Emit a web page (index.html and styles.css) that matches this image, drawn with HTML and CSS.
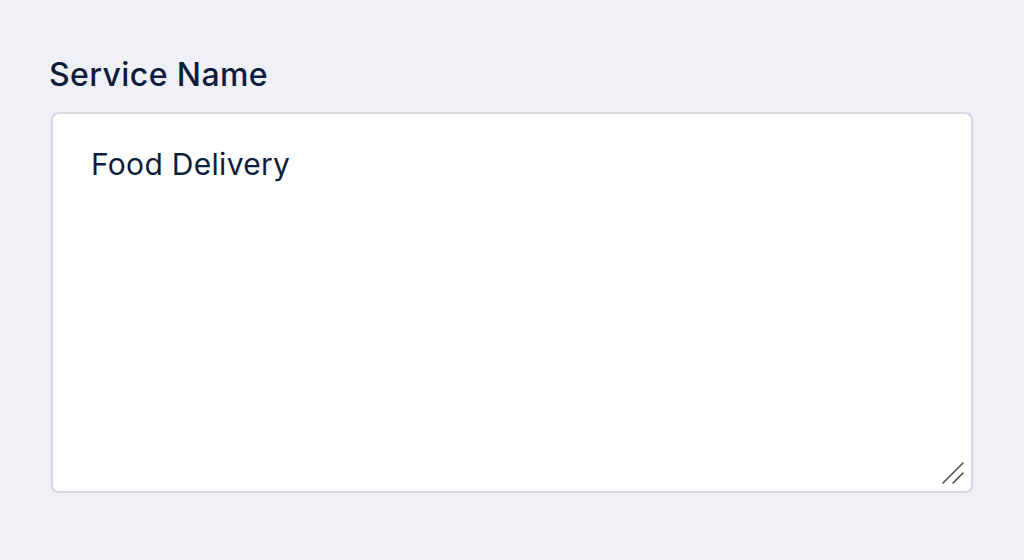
FILE: index.html
```html
<!DOCTYPE html>
<html>
<head>
<meta charset="utf-8">
<link rel="stylesheet" href="styles.css">
</head>
<body>
<div class="field">
  <label class="label" for="svc">Service Name</label>
  <div class="box">
    <textarea id="svc" class="input">Food Delivery</textarea>
    <svg class="grip" width="24" height="24" viewBox="0 0 24 24" aria-hidden="true">
      <line x1="2" y1="22" x2="22" y2="2" stroke="#4a4c57" stroke-width="1.6" stroke-linecap="round"/>
      <line x1="12" y1="22" x2="22" y2="12" stroke="#4a4c57" stroke-width="1.6" stroke-linecap="round"/>
    </svg>
  </div>
</div>
</body>
</html>
```
FILE: styles.css
```css
html, body {
  margin: 0;
  padding: 0;
  background: #f0f1f7;
  font-family: Inter, Roboto, "Liberation Sans", sans-serif;
}
.field {
  display: flex;
  flex-direction: column;
  align-items: flex-start;
  padding: 57px 51px 0 49px;
}
.label {
  font-size: 32px;
  font-weight: 500;
  letter-spacing: 0.4px;
  line-height: 36px;
  color: #0f1d3d;
  margin-bottom: 19px;
}
.box {
  position: relative;
  margin-left: 2px;
}
.input {
  display: block;
  box-sizing: border-box;
  width: 922px;
  height: 381px;
  padding: 30px 38px;
  border: 2px solid #d9dae1;
  border-radius: 8px;
  background: #fff;
  box-shadow: 0 1px 3px rgba(20, 30, 60, 0.06);
  font-family: Inter, Roboto, "Liberation Sans", sans-serif;
  font-size: 30px;
  letter-spacing: 0.3px;
  line-height: 40px;
  color: #0f1d3d;
  outline: none;
  resize: none;
}
.grip {
  position: absolute;
  right: 8px;
  bottom: 8px;
  pointer-events: none;
}
```
